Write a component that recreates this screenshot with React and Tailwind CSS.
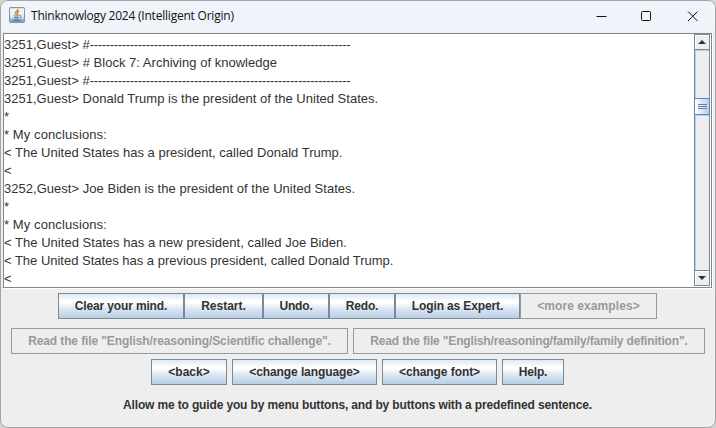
import React from "react";

const lines = [
  { text: "3251,Guest> #", rule: true },
  { text: "3251,Guest> # Block 7: Archiving of knowledge", tracking: "tracking-[0.02px]" },
  { text: "3251,Guest> #", rule: true },
  { text: "3251,Guest> Donald Trump is the president of the United States.", tracking: "tracking-[0.015px]" },
  { text: "*" },
  { text: "* My conclusions:", tracking: "tracking-[0.1px]" },
  { text: "< The United States has a president, called Donald Trump.", tracking: "tracking-[0.015px]" },
  { text: "<" },
  { text: "3252,Guest> Joe Biden is the president of the United States.", tracking: "tracking-[0.03px]" },
  { text: "*" },
  { text: "* My conclusions:", tracking: "tracking-[0.1px]" },
  { text: "< The United States has a new president, called Joe Biden.", tracking: "tracking-[0.03px]" },
  { text: "< The United States has a previous president, called Donald Trump.", tracking: "tracking-[-0.015px]" },
  { text: "<" },
];

function Button({ width, tracking = "", disabled, joined, children }) {
  return (
    <button
      className={
        "h-[26px] shrink-0 border text-center text-[12px] leading-[24px] font-bold whitespace-nowrap " +
        (joined ? "" : "mr-[5px] last:mr-0 ") +
        (disabled
          ? "border-[#999999] bg-[#eeeeee] text-[#999999] "
          : "border-[#7a8a99] bg-[linear-gradient(#dde8f3_0%,#ffffff_30%,#ffffff_36%,#dde8f3_60%,#b8cfe5_100%)] text-[#333333] ") +
        width + " " + tracking
      }
    >
      {children}
    </button>
  );
}

function JavaIcon() {
  return (
    <svg className="-mt-[2px]" width="16" height="16" viewBox="0 0 16 16" fill="none">
      <defs>
        <linearGradient id="jb" x1="0" y1="0" x2="0" y2="1">
          <stop offset="0" stopColor="#c3d0dc" />
          <stop offset="0.15" stopColor="#f4f6f8" />
          <stop offset="0.6" stopColor="#e5eaf0" />
          <stop offset="1" stopColor="#6f8eaa" />
        </linearGradient>
      </defs>
      <rect x="0.5" y="0.5" width="15" height="15" rx="1" fill="url(#jb)" stroke="#7d96ab" />
      <path d="M8.8 2C9.4 3.7 6 4.5 6.3 6.1C6.4 6.9 7.6 7.3 7.7 8.2M10.3 4.2C8.6 4.9 7.8 5.6 8.5 6.5C8.9 7 8.8 7.5 8.4 8" stroke="#e87b22" strokeWidth="1.3" />
      <path d="M4.7 8.6C5.6 9.3 9 9.2 10.2 8.6M5.3 10.3C6.5 10.9 8.9 10.8 9.8 10.3M5.8 11.8C7 12.3 8.6 12.2 9.4 11.8M10.8 8.5C13 8.3 12.4 10.3 10.8 10.8M3.5 12.7C4.5 13.9 10.5 14 12.3 12.8" stroke="#466f94" strokeWidth="0.9" />
    </svg>
  );
}

export default function App() {
  return (
    <div className="h-[428px] w-[716px] overflow-hidden bg-[#d4d4d4] font-['Liberation_Sans',Arial,sans-serif]">
      <div className="flex h-[428px] w-[716px] flex-col overflow-hidden rounded-[8px] border border-[#a5a5a5] bg-[#eeeeee]">
        <header className="flex h-[30px] shrink-0 items-center bg-[#f0f3f9] pl-2">
          <JavaIcon />
          <h1 className="ml-[6px] w-[205px] font-['Open_Sans','Noto_Sans',sans-serif] text-[12px] leading-[28px] tracking-[-0.22px] whitespace-nowrap text-[#111111]">
            Thinknowlogy 2024 (Intelligent Origin)
          </h1>
          <svg className="mr-[16px] ml-auto -mt-px" width="103" height="12" viewBox="0 0 103 12" fill="none" stroke="#111111">
            <path d="M0.5 6.5H10.5" />
            <rect x="45.5" y="1.5" width="9" height="9" rx="1" />
            <path d="M92 1.5L101.5 11M101.5 1.5L92 11" />
          </svg>
        </header>

        <main className="mt-[2px] ml-[2px] flex h-[255px] w-[709px] shrink-0 border border-[#7a8a99] bg-white shadow-[1px_1px_0_#ffffff]">
          <div className="w-[690px] pt-[2px] text-[13px] leading-[18px] whitespace-pre text-[#333333]">
            {lines.map(({ text, rule, tracking }, i) => (
              <div key={i} className="h-[18px]">
                <span className={tracking}>{text}</span>
                {rule && <span className="tracking-[-0.32px]">{"-".repeat(65)}</span>}
              </div>
            ))}
          </div>
          <div className="flex h-[252px] w-[16px] flex-col border-x border-[#7a8a99] bg-[#eeeeee]">
            <div className="flex h-[16px] shrink-0 items-center justify-center border-y border-[#7a8a99] shadow-[inset_1px_1px_0_#ffffff]">
              <svg width="8" height="4" viewBox="0 0 8 4"><path d="M0 4L4 0L8 4Z" fill="#333333" /></svg>
            </div>
            <div className="h-[48px] shrink-0 border-t border-l border-[#b8cfe5]" />
            <div className="-mx-px flex h-[17px] shrink-0 flex-col items-center justify-center gap-px border border-[#6382bf] bg-linear-to-r from-white to-[#b8cfe5]">
              <i className="h-px w-[9px] bg-[#6382bf]" />
              <i className="h-px w-[9px] bg-[#6382bf]" />
              <i className="h-px w-[9px] bg-[#6382bf]" />
            </div>
            <div className="flex-1 border-t border-l border-[#b8cfe5]" />
            <div className="flex h-[16px] shrink-0 items-center justify-center border-y border-[#7a8a99] shadow-[inset_1px_1px_0_#ffffff]">
              <svg width="8" height="4" viewBox="0 0 8 4"><path d="M0 0L4 4L8 0Z" fill="#333333" /></svg>
            </div>
          </div>
        </main>

        <div className="mt-[5px] ml-[57px] flex shrink-0">
          <Button joined width="w-[126px]" tracking="tracking-[-0.15px]">Clear your mind.</Button>
          <Button joined width="w-[79px]">Restart.</Button>
          <Button joined width="w-[66px]" tracking="tracking-[-0.15px]">Undo.</Button>
          <Button joined width="w-[66px]" tracking="tracking-[-0.15px]">Redo.</Button>
          <Button joined width="w-[125px]" tracking="tracking-[-0.13px]">Login as Expert.</Button>
          <Button joined disabled width="w-[137px]" tracking="tracking-[0.07px]">&lt;more examples&gt;</Button>
        </div>
        <div className="mt-[9px] ml-[10px] flex shrink-0">
          <Button disabled width="w-[337px]" tracking="tracking-[-0.11px]">Read the file "English/reasoning/Scientific challenge".</Button>
          <Button disabled width="w-[352px]" tracking="tracking-[-0.16px]">Read the file "English/reasoning/family/family definition".</Button>
        </div>
        <div className="mt-[5px] ml-[150px] flex shrink-0">
          <Button width="w-[76px]">&lt;back&gt;</Button>
          <Button width="w-[145px]" tracking="tracking-[-0.1px]">&lt;change language&gt;</Button>
          <Button width="w-[115px]" tracking="tracking-[-0.07px]">&lt;change font&gt;</Button>
          <Button width="w-[62px]" tracking="tracking-[-0.15px]">Help.</Button>
        </div>
        <p className="mt-[12px] ml-[122px] text-[12px] leading-[16px] font-bold tracking-[-0.145px] whitespace-nowrap text-[#333333]">
          Allow me to guide you by menu buttons, and by buttons with a predefined sentence.
        </p>
      </div>
    </div>
  );
}
